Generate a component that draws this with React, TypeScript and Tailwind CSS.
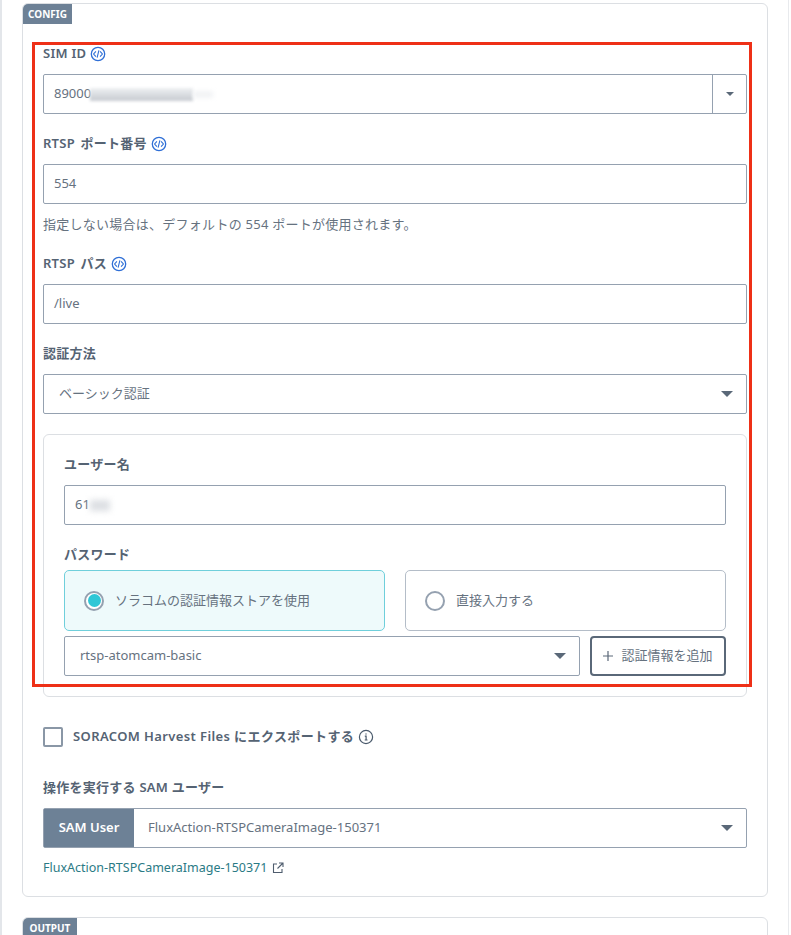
const font = { fontFamily: '"Noto Sans", "Noto Sans CJK JP", sans-serif' }

const CodeIcon = () => (
  <svg width="16" height="16" viewBox="0 0 16 16" fill="none" stroke="#2f6fd6" strokeWidth="1.3" className="ml-[4px] shrink-0">
    <circle cx="8" cy="8" r="6.7" />
    <path d="M5.9 5.4 3.6 8l2.3 2.6M10.1 5.4 12.4 8l-2.3 2.6M8.9 4.4 7.1 11.6" strokeWidth="1.1" />
  </svg>
)

const InfoIcon = () => (
  <svg width="16" height="16" viewBox="0 0 16 16" fill="none" stroke="#4a5a6c" strokeWidth="1.2" className="ml-1 shrink-0">
    <circle cx="8" cy="8" r="6.6" />
    <path d="M6.8 7.2H8.1V11M6.7 11H9.5" />
    <path d="M8 4.4v1.2" strokeWidth="1.4" />
  </svg>
)

const PlusIcon = () => (
  <svg width="10" height="10" viewBox="0 0 10 10" fill="none" stroke="#5a6878" strokeWidth="1.2" className="mr-2 shrink-0">
    <path d="M5 0v10M0 5h10" />
  </svg>
)

const Caret = ({ small }: { small?: boolean }) => (
  <div className={small ? 'h-0 w-0 border-x-[4px] border-t-[4px] border-x-transparent border-t-[#5a6878]' : 'h-0 w-0 border-x-[6px] border-t-[6px] border-x-transparent border-t-[#5a6878]'} />
)

const Label = ({ children, className }: { children: React.ReactNode; className: string }) => (
  <div className={`flex h-5 items-center text-[13px] font-semibold tracking-[0.02em] text-[#556373] ${className}`}>{children}</div>
)

const TextBox = ({ value, className }: { value: string; className: string }) => (
  <div className={`flex h-10 items-center rounded-[2px] border border-[#95a1b0] bg-white text-[13px] text-[#66727f] ${className}`}>
    {value}
  </div>
)

const Tag = ({ children, className }: { children: string; className: string }) => (
  <div className={`flex h-5 items-center justify-center rounded-tl-[5px] bg-[#6d8196] text-[10px] font-bold text-white ${className}`}>
    {children}
  </div>
)

const App = () => {
  return (
    <div style={font} className="relative h-[935px] overflow-hidden bg-white">
      <div className="absolute bottom-0 left-0 top-0 w-[2px] bg-[#e3e6ea]" />
      <div className="absolute bottom-0 right-[2px] top-0 w-px bg-[#e8eaed]" />

      <div className="ml-[22px] mt-[3px] h-[894px] w-[746px] rounded-[6px] border border-[#dcdfe3]">
        <Tag className="w-[49px]">CONFIG</Tag>
        <div className="px-5">
          <Label className="mt-5">
            SIM ID <CodeIcon />
          </Label>
          <div className="mt-2.5 flex h-10 rounded-[2px] border border-[#95a1b0] text-[13px] text-[#66727f]">
            <div className="flex flex-1 items-center pl-[10px]">
              <span>89000</span>
              <span className="-ml-px h-[13px] w-[103px] bg-[linear-gradient(180deg,#eef0f2,#c6cad0)] blur-[1.5px]" />
              <span className="h-[7px] w-[20px] bg-[#f2f3f5] blur-[2px]" />
            </div>
            <div className="flex w-[34px] items-center justify-center border-l border-[#95a1b0]">
              <Caret small />
            </div>
          </div>

          <Label className="mt-5 [word-spacing:2px]">
            RTSP ポート番号 <CodeIcon />
          </Label>
          <TextBox value="554" className="mt-2.5 pl-[10px]" />
          <div className="mt-[11px] flex h-5 items-center text-[13px] tracking-[0.02em] text-[#66727f]">
            指定しない場合は、デフォルトの 554 ポートが使用されます。
          </div>

          <Label className="mt-[19px] [word-spacing:2px]">
            RTSP パス <CodeIcon />
          </Label>
          <TextBox value="/live" className="mt-2.5 pl-[10px]" />

          <Label className="mt-5">認証方法</Label>
          <div className="mt-2.5 flex h-10 items-center justify-between rounded-[2px] border border-[#95a1b0] pl-[15px] pr-[13px] text-[13px] text-[#66727f]">
            ベーシック認証
            <Caret />
          </div>

          <div className="mt-5 h-[263px] rounded-[6px] border border-[#dcdfe3] px-5">
            <Label className="mt-5">ユーザー名</Label>
            <div className="mt-2.5 flex h-10 items-center rounded-[2px] border border-[#95a1b0] pl-[10px] text-[13px] text-[#66727f]">
              <span>61</span>
              <span className="h-[11px] w-[20px] bg-[#dcdfe3] blur-[3px]" />
            </div>

            <Label className="mt-5">パスワード</Label>
            <div className="mt-[5px] grid grid-cols-2 gap-5">
              <div className="flex h-[61px] items-center rounded-[5px] border border-[#6fcfdb] bg-[#eefafb] pl-[19px] text-[13px] text-[#66727f]">
                <span className="flex h-5 w-5 items-center justify-center rounded-full border-2 border-[#95a1b0] bg-white">
                  <span className="h-[13px] w-[13px] rounded-full bg-[#2fc7d6]" />
                </span>
                <span className="ml-[11px]">ソラコムの認証情報ストアを使用</span>
              </div>
              <div className="flex h-[61px] items-center rounded-[5px] border border-[#b4bdc8] pl-[19px] text-[13px] text-[#66727f]">
                <span className="h-5 w-5 rounded-full border-2 border-[#95a1b0]" />
                <span className="ml-[11px]">直接入力する</span>
              </div>
            </div>
            <div className="mt-[5px] flex gap-2.5">
              <div className="flex h-10 w-[516px] items-center justify-between rounded-[2px] border border-[#95a1b0] pl-[15px] pr-[13px] text-[13px] text-[#66727f]">
                rtsp-atomcam-basic
                <Caret />
              </div>
              <div className="flex h-10 flex-1 items-center justify-center rounded-[4px] border-2 border-[#5a6878] text-[13px] text-[#66727f]">
                <PlusIcon />
                認証情報を追加
              </div>
            </div>
          </div>

          <div className="mt-[30px] flex h-5 items-center">
            <span className="h-5 w-5 rounded-[2px] border-2 border-[#8a97a6] bg-white" />
            <span className="ml-[10px] text-[13px] font-semibold tracking-[0.03em] text-[#556373]">
              SORACOM Harvest Files にエクスポートする
            </span>
            <InfoIcon />
          </div>

          <Label className="mt-[31px]">操作を実行する SAM ユーザー</Label>
          <div className="mt-2.5 flex h-10 rounded-[2px] border border-[#95a1b0] text-[13px]">
            <div className="flex w-[90px] items-center justify-center bg-[#6d8196] font-semibold text-white">SAM User</div>
            <div className="flex flex-1 items-center justify-between pl-[14px] pr-[13px] text-[#66727f]">
              FluxAction-RTSPCameraImage-150371
              <Caret />
            </div>
          </div>
          <div className="mt-2.5 flex h-5 items-center text-[12.5px] text-[#2a7a85]">
            FluxAction-RTSPCameraImage-150371
            <svg width="12" height="12" viewBox="0 0 12 12" fill="none" stroke="#4f5d6e" strokeWidth="1.1" className="ml-[5px]">
              <path d="M5 2H1.5v8.5H10V7M7 1h4v4M11 1 5.5 6.5" />
            </svg>
          </div>
        </div>
      </div>

      <div className="ml-[22px] mt-[20px] h-10 w-[746px] rounded-[6px] border border-[#dcdfe3]">
        <Tag className="w-[54px]">OUTPUT</Tag>
      </div>

      <div className="pointer-events-none absolute left-[32px] top-[42px] h-[645px] w-[720px] border-[3px] border-[#ee3017]" />
    </div>
  )
}

export default App
